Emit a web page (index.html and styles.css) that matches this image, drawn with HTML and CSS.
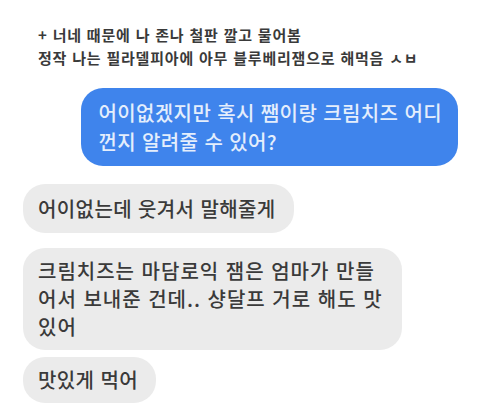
FILE: index.html
```html
<!DOCTYPE html>
<html lang="ko">
<head>
    <meta charset="UTF-8">
    <meta name="viewport" content="width=device-width, initial-scale=1.0">
    <title>Chat</title>
    <link rel="stylesheet" href="styles.css">
</head>
<body>
    <div class="chat">
        <div class="note">
            <p>+ 너네 때문에 나 존나 철판 깔고 물어봄</p>
            <p>정작 나는 필라델피아에 아무 블루베리잼으로 해먹음 ㅅㅂ</p>
        </div>
        <div class="msg sent">어이없겠지만 혹시 쨈이랑 크림치즈 어디<br>껀지 알려줄 수 있어?</div>
        <div class="msg received first">어이없는데 웃겨서 말해줄게</div>
        <div class="group">
            <div class="msg received long">크림치즈는 마담로익 잼은 엄마가 만들<br>어서 보내준 건데.. 샹달프 거로 해도 맛<br>있어</div>
            <div class="msg received">맛있게 먹어</div>
        </div>
    </div>
</body>
</html>
```

FILE: styles.css
```css
body {
    margin: 0;
    background: #fff;
    font-family: "Noto Sans CJK KR", "Noto Sans", sans-serif;
}
.chat {
    display: flex;
    flex-direction: column;
    padding: 23px 22px 0 23px;
}
.note {
    padding-left: 15px;
    font-size: 15px;
    font-weight: bold;
    letter-spacing: 0.8px;
    line-height: 23px;
    color: #3a3a3a;
}
.note p {
    margin: 0;
}
.msg {
    font-size: 20px;
    font-weight: 500;
    letter-spacing: 0.4px;
    line-height: 28px;
    padding: 10px 18px 10px 15px;
    border-radius: 22px;
    white-space: nowrap;
}
.sent {
    align-self: flex-end;
    margin-top: 19px;
    padding-left: 17px;
    padding-right: 16px;
    line-height: 29px;
    background: #3f84ec;
    color: #e4eefc;
}
.received {
    align-self: flex-start;
    background: #ebebeb;
    color: #3a3a3a;
}
.first {
    margin-top: 18px;
    padding-top: 11px;
}
.group {
    display: flex;
    flex-direction: column;
    align-items: flex-start;
    gap: 7px;
    margin-top: 15px;
}
.group .msg {
    padding-top: 9px;
    padding-bottom: 9px;
}
.long {
    letter-spacing: 1px;
    padding-right: 19px;
}
```
